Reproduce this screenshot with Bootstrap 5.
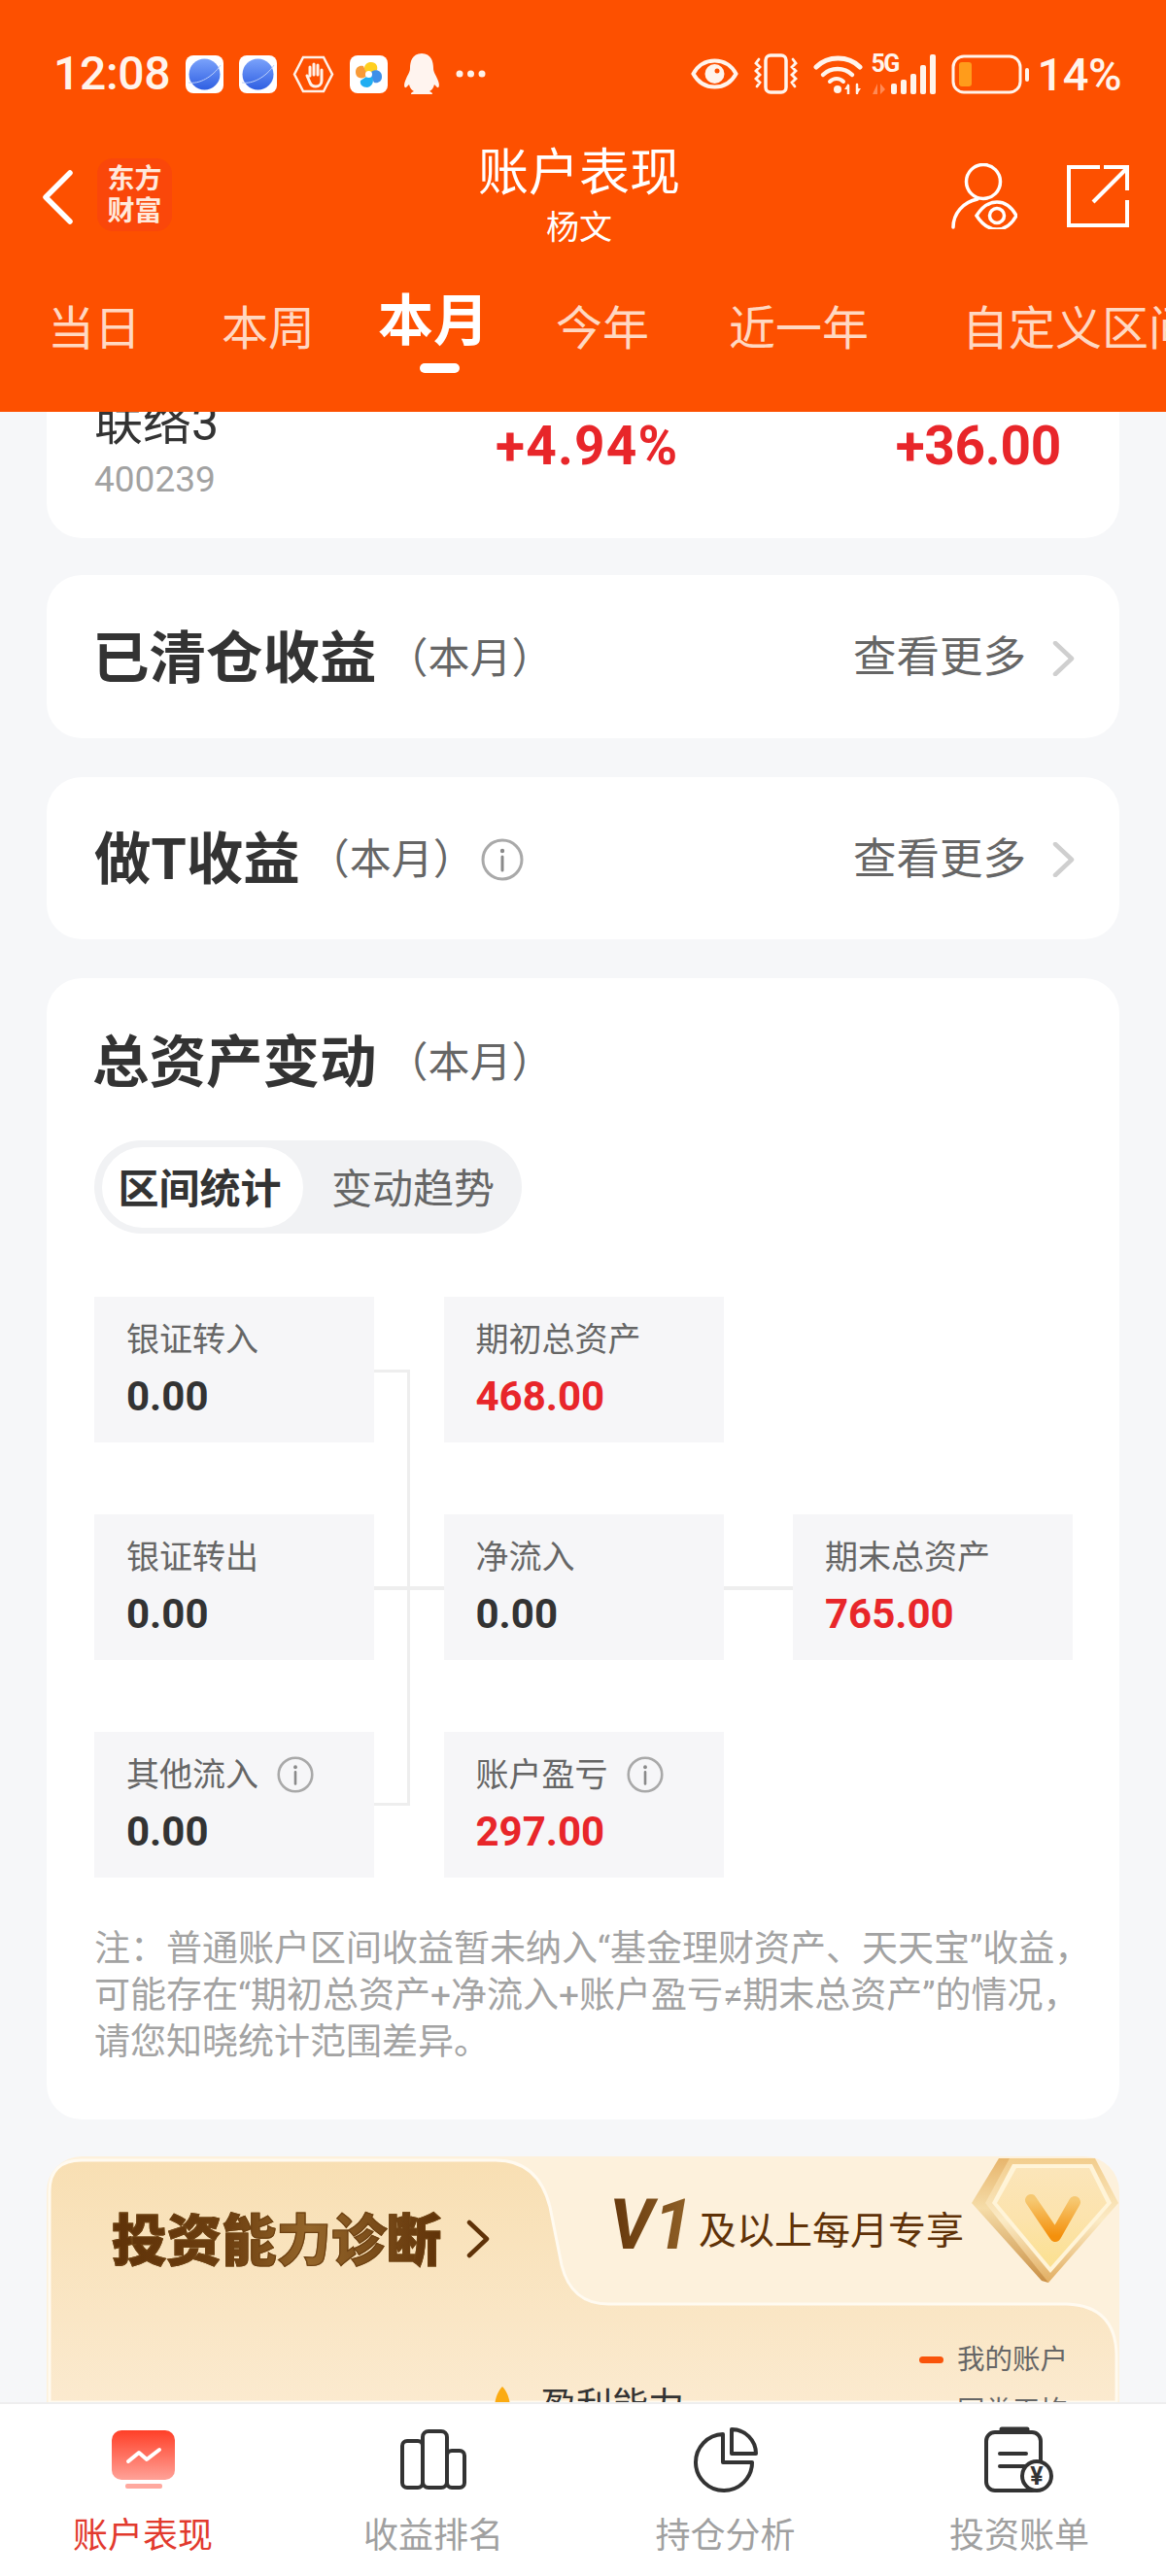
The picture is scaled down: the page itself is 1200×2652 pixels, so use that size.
<!DOCTYPE html>
<html lang="zh-CN">
<head>
<meta charset="UTF-8">
<meta name="viewport" content="width=device-width, initial-scale=1.0">
<title>账户表现</title>
<link href="https://cdn.jsdelivr.net/npm/bootstrap@5.3.0/dist/css/bootstrap.min.css" rel="stylesheet">
<style>
  html, body { height: 2652px; }
  body { font-family: Roboto, "Noto Sans CJK SC", sans-serif; background: #f6f7f9; color: #333; overflow: hidden; }
  svg { display: block; flex-shrink: 0; }

  /* 顶部 */
  .top-head { height: 424px; background: #fd5000; color: #fff; flex-shrink: 0; }
  .status-row { height: 152px; padding: 0 46px 0 55px; color: #fff4ec; }
  .status-time { font-size: 48px; font-weight: 500; line-height: 1; width: 120px; letter-spacing: -.3px; }
  .status-pct { font-size: 47px; font-weight: 500; line-height: 1; letter-spacing: -.5px; }
  .title-row { height: 149px; }
  .title-left { width: 240px; padding-left: 43px; }
  .title-right { width: 248px; padding-left: 27px; }
  .logo-tile { width: 77px; height: 75px; margin-left: 25px; margin-top: 11px; background: #fa470a; border-radius: 16px; font-size: 28px; line-height: 33px; font-weight: 700; color: #ffe9dc; text-align: center; padding-top: 5px; }
  .back-arrow { margin-top: 23px; }
  .page-title { font-size: 52px; line-height: 58px; margin-top: -2px; }
  .page-sub { font-size: 34px; line-height: 42px; margin-top: 5px; }
  .person-icon { margin-top: 16px; }
  .share-icon { margin: 18px 0 0 51px; }
  .tab-row { padding-left: 49px; height: 123px; overflow: hidden; font-size: 48px; line-height: 60px; color: #ffd8c2; white-space: nowrap; }
  .tab-item { flex-shrink: 0; position: relative; margin-top: 8px; }
  .tab-item:nth-child(2) { margin-left: 83px; }
  .tab-item:nth-child(3) { margin-left: 65px; margin-top: 0; font-size: 57px; font-weight: 700; color: #fff; }
  .tab-item:nth-child(4) { margin-left: 69px; }
  .tab-item:nth-child(5) { margin-left: 82px; }
  .tab-item:nth-child(6) { margin-left: 96px; }
  .tab-item:nth-child(3)::after { content: ""; position: absolute; left: 43px; top: 73px; width: 41px; height: 10px; border-radius: 5px; background: #fff; }

  /* 内容 */
  .scroll-area { flex: 1 1 auto; min-height: 0; overflow: hidden; padding: 0 48px; }
  .acct-card { border: 0; border-radius: 36px; background: #fff; margin-bottom: 40px; }
  .hold-card { height: 230px; margin-top: -100px; margin-bottom: 38px; padding: 82px 60px 0 49px; }
  .hold-name { width: 413px; }
  .hold-title { font-size: 50px; line-height: 60px; color: #333; }
  .hold-code { font-size: 37px; line-height: 44px; color: #a2a2a2; margin-top: 6px; }
  .hold-pct { width: 300px; font-size: 55px; line-height: 60px; margin-top: 23px; font-weight: 700; color: #e8262a; letter-spacing: 1.200px; }
  .hold-amt { font-size: 55px; line-height: 60px; margin-top: 23px; font-weight: 700; color: #e8262a; letter-spacing: -.3px; }
  .link-card { height: 168px; padding: 3px 46px 0 47px; }
  .link-card.short-card { height: 167px; padding-left: 49px; }
  .sec-title { font-size: 58.500px; line-height: 70px; font-weight: 700; color: #333; }
  .sec-range { font-size: 43px; line-height: 70px; color: #666; margin-left: 10px; }
  .short-card .sec-range { margin-left: 8px; }
  .more-text { font-size: 44.500px; color: #666; margin-right: 27px; }
  .info-gap { margin-left: 6px; }

  .asset-card { padding: 52px 48px 55px 49px; margin-bottom: 38px; }
  .asset-card .sec-title { margin-left: -2px; }
  .seg-pills { width: 440px; height: 96px; margin-top: 45px; padding: 7px 8px; background: #f1f2f4; border-radius: 48px; flex-wrap: nowrap; }
  .seg-pills .nav-link { padding: 0; height: 83px; line-height: 87px; font-size: 42px; text-align: center; color: #666; white-space: nowrap; }
  .seg-pills .nav-link.active { width: 207px; padding-right: 6px; background: #fff; color: #333; font-weight: 700; border-radius: 42px; }
  .seg-pills .nav-item:last-child { margin-left: 29px; }
  .flow-chart { position: relative; margin-top: 65px; display: grid; grid-template-columns: repeat(3, 288px); grid-auto-rows: 150px; column-gap: 71.500px; row-gap: 74px; }
  .flow-box { background: #f6f6f8; padding: 22px 0 0 33px; position: relative; z-index: 1; }
  .flow-label { font-size: 34px; line-height: 44px; color: #666; }
  .flow-value { font-size: 42px; line-height: 50px; margin-top: 12px; font-weight: 700; color: #333; }
  .flow-value.up { color: #e8262a; }
  .flow-line { position: absolute; background: #eeeeee; }
  .label-info { margin-left: 19px; }
  .note-text { margin-top: 50px; font-size: 37px; line-height: 48px; color: #a3a3a3; white-space: nowrap; }

  .diag-banner { height: 253px; position: relative; background: #fdf1dc; border-radius: 36px 36px 0 0; overflow: hidden; margin-bottom: 0; }
  .diag-shape { position: absolute; left: 0; top: 0; }
  .diag-top { position: relative; height: 152px; flex-shrink: 0; }
  .diag-title { font-size: 56.500px; line-height: 64px; font-weight: 900; margin: 56px 0 0 67px; width: 340px; white-space: nowrap; background: linear-gradient(90deg, #5f3208 0%, #6d3f10 35%, #95662a 60%, #5f3208 100%); -webkit-background-clip: text; background-clip: text; color: transparent; -webkit-text-stroke: 1.200px #6e4213; }
  .diag-arrow { margin: 65px 0 0 25px; }
  .diag-v { font-size: 72px; line-height: 72px; font-weight: 700; font-style: italic; margin: 35px 0 0 123px; width: 92px; white-space: nowrap; background: linear-gradient(90deg, #64360b, #95662a); -webkit-background-clip: text; background-clip: text; color: transparent; }
  .diag-once { font-size: 39px; line-height: 50px; color: #5f3208; margin: 52px 0 0 0; white-space: nowrap; }
  .diag-badge { position: absolute; right: 0; top: 1px; }
  .diag-low { position: relative; padding: 0 53px 0 461px; flex-shrink: 0; }
  .diag-skill { margin-top: 81px; font-size: 37px; line-height: 50px; color: #333; white-space: nowrap; }
  .thumb-tip { margin: 4px 31px 0 0; }
  .legend-col { padding-top: 31px; font-size: 28.500px; line-height: 53px; color: #666; }
  .legend-dash { width: 25px; height: 7px; border-radius: 4px; background: #f9540b; margin-right: 14px; }
  .legend-dash.other { background: #d9c8a8; }

  /* 底部 */
  .foot-nav { height: 179px; background: #fff; border-top: 2px solid #eeeeee; padding: 22px 0 0 0; flex-shrink: 0; position: relative; }
  .foot-nav > div:nth-child(1) { padding-right: 6px; }
  .foot-nav > div:nth-child(2) { padding-right: 8px; }
  .foot-nav > div:nth-child(3) { padding-right: 7px; }
  .foot-nav > div:nth-child(4) { padding-right: 2px; }
  .foot-icon { height: 70px; }
  .foot-label { font-size: 36px; line-height: 44px; margin-top: 22px; color: #a0a0a0; }
  .foot-label.active { color: #e23a2e; }
</style>
</head>
<body class="d-flex flex-column">

<svg width="0" height="0" class="position-absolute">
  <defs>
    <linearGradient id="planetFill" x1="0" y1="0" x2="0" y2="1"><stop offset="0" stop-color="#7aa2fb"/><stop offset="1" stop-color="#2f5fe2"/></linearGradient>
    <linearGradient id="tabIconFill" x1="0" y1="0" x2="0" y2="1"><stop offset="0" stop-color="#ff3f27"/><stop offset="1" stop-color="#ffa298"/></linearGradient>
    <linearGradient id="panelFill" x1="0" y1="0" x2="0" y2="1"><stop offset="0" stop-color="#f8dfb3"/><stop offset="1" stop-color="#fbeacf"/></linearGradient>
    <linearGradient id="gemSide" x1="0" y1="0" x2="0" y2="1"><stop offset="0" stop-color="#e7b56c"/><stop offset=".4" stop-color="#f5dca8"/><stop offset="1" stop-color="#c98f45"/></linearGradient>
    <linearGradient id="gemRim" x1="0" y1="0" x2="0" y2="1"><stop offset="0" stop-color="#f2cd8d"/><stop offset=".5" stop-color="#fbeac4"/><stop offset="1" stop-color="#e2ae62"/></linearGradient>
    <linearGradient id="gemFace" x1="0" y1="0" x2="0" y2="1"><stop offset="0" stop-color="#fbe5b9"/><stop offset=".5" stop-color="#fce3ad"/><stop offset="1" stop-color="#fbe08f"/></linearGradient>
    <linearGradient id="gemV" x1="0" y1="0" x2="0" y2="1"><stop offset="0" stop-color="#f6c871"/><stop offset="1" stop-color="#f4900c"/></linearGradient>
    <symbol id="infoIcon" viewBox="0 0 44 44">
      <circle cx="22" cy="22" r="20" fill="none" stroke="#a9a9a9" stroke-width="3"/>
      <circle cx="22" cy="13" r="2.200" fill="#8a8a8a"/>
      <path d="M22 19v14" stroke="#8a8a8a" stroke-width="3" stroke-linecap="round"/>
    </symbol>
    <symbol id="planetTile" viewBox="0 0 39 39">
      <rect width="39" height="39" rx="8" fill="#fff"/>
      <circle cx="19.500" cy="19.500" r="16" fill="url(#planetFill)"/>
      <path d="M3 28C14 30 28 22 36 10" fill="none" stroke="#bcd0fb" stroke-width="1"/>
    </symbol>
    <symbol id="chevGrey" viewBox="0 0 23 36">
      <path d="M3 2l17 16L3 34" fill="none" stroke="#cfcfcf" stroke-width="4.500" stroke-linecap="round" stroke-linejoin="round"/>
    </symbol>
  </defs>
</svg>

<header class="top-head">
  <div class="status-row d-flex align-items-center">
    <span class="status-time">12:08</span>
    <svg class="ms-3" width="39" height="39"><use href="#planetTile"/></svg>
    <svg class="ms-3" width="39" height="39"><use href="#planetTile"/></svg>
    <svg class="ms-3" width="43" height="39" viewBox="0 0 43 39" fill="none" stroke="#fff1e8">
      <path d="M11 2h21l9 17.500L32 37H11L2 19.500z" stroke-width="2.500"/>
      <path d="M15 21l3 7c1 3 3 4 6 4s6-2 6-6v-9M18 21v-9M22 20V9M26 20V10M30 20v-5" stroke-width="3" stroke-linecap="round"/>
    </svg>
    <svg class="ms-3" width="39" height="39" viewBox="0 0 39 39">
      <rect width="39" height="39" rx="8" fill="#fff"/>
      <path d="M19 19C12 15 15 7 22 7c5 0 7 4 6 8z" fill="#ffcf1f"/>
      <path d="M20 19c4-6 13-5 13 3 0 5-4 7-8 6z" fill="#3f8fe8"/>
      <path d="M20 20c6 2 5 12-2 13-5 0-8-3-7-7z" fill="#20aef2"/>
      <path d="M18 20c-3 5-12 5-12-3 0-5 4-7 8-6z" fill="#f89a38"/>
      <circle cx="19.500" cy="19.500" r="3.500" fill="#fff"/>
    </svg>
    <svg class="ms-3" width="38" height="42" viewBox="0 0 38 42">
      <path d="M19 0C9 0 7 9 7 15c0 4-2 6-4 11-3 6-2 10 0 9l3-3c1 4 3 6 5 7-3 1-4 3-2 3h20c2 0 1-2-2-3 2-1 4-3 5-7l3 3c2 1 3-3 0-9-2-5-4-7-4-11 0-6-2-15-12-15z" fill="#fff4ef"/>
    </svg>
    <svg class="ms-3" width="31" height="8" viewBox="0 0 31 8" fill="#fff1e8"><circle cx="4" cy="4" r="3.500"/><circle cx="15.500" cy="4" r="3.500"/><circle cx="27" cy="4" r="3.500"/></svg>

    <svg class="ms-auto" width="49" height="32" viewBox="0 0 49 32">
      <path d="M2.500 16C8 6 16 2.500 24.500 2.500S41 6 46.500 16C41 26 33 29.500 24.500 29.500S8 26 2.500 16z" fill="none" stroke="#fff4ec" stroke-width="4"/>
      <circle cx="24.500" cy="16" r="10" fill="#fff4ec"/><circle cx="27" cy="13" r="2.500" fill="#fd5000"/>
    </svg>
    <svg class="ms-3" width="45" height="42" viewBox="0 0 45 42" fill="none" stroke="#fff4ec" stroke-linecap="round">
      <rect x="12" y="2" width="21" height="38" rx="5" stroke-width="3.500"/>
      <path d="M5 6L2 10l4 4-4 4 4 4-4 4 4 4-3 4M40 6l3 4-4 4 4 4-4 4 4 4-4 4 3 4" stroke-width="2.800"/>
    </svg>
    <svg class="ms-3" width="51" height="41" viewBox="0 0 51 41" fill="none" stroke="#fff4ec" stroke-linecap="round">
      <path d="M3 13C15 1 36 1 48 13" stroke-width="5"/>
      <path d="M10 21c8-8 22-8 30 0" stroke-width="4.500"/>
      <path d="M17 28c4-4 10-4 14 0" stroke-width="4"/>
      <circle cx="25" cy="36" r="4" fill="#fff4ec" stroke="none"/>
      <path d="M36 32v9M45 31v9" stroke-width="2.500"/><path d="M36 30l-4 6h4zM45 41l4-6h-4z" fill="#fff4ec" stroke="none"/>
    </svg>
    <div class="position-relative ms-2" style="width:67px;height:42px">
      <span class="position-absolute top-0 start-0" style="font-size:25px;line-height:22px;font-weight:700;letter-spacing:-1.500px;color:#fff4ec">5G</span>
      <svg width="67" height="42" viewBox="0 0 67 42">
        <path d="M2 42l5-11v11zM10 31l5 6-5 5z" fill="#ff8a55"/>
        <g fill="#fff4ec"><rect x="21" y="31" width="6" height="11" rx="2"/><rect x="31" y="27" width="6" height="15" rx="2"/><rect x="41" y="21" width="6" height="21" rx="2"/><rect x="51" y="12" width="6" height="30" rx="2"/><rect x="61" y="1" width="6" height="41" rx="2"/></g>
      </svg>
    </div>
    <svg class="ms-3" width="80" height="41" viewBox="0 0 80 41">
      <rect x="2" y="2" width="69" height="37" rx="11" fill="none" stroke="#fff4ec" stroke-width="3"/>
      <rect x="8" y="8" width="13" height="25" rx="3" fill="#ff9c1b"/>
      <rect x="76" y="14" width="4" height="14" rx="2" fill="#fff4ec"/>
    </svg>
    <span class="status-pct ms-2">14%</span>
  </div>

  <div class="title-row d-flex align-items-start">
    <div class="title-left d-flex align-items-start">
      <svg class="back-arrow" width="32" height="56" viewBox="0 0 32 56"><path d="M29 3L4 28l25 25" fill="none" stroke="#fff" stroke-width="5.500" stroke-linecap="round" stroke-linejoin="round"/></svg>
      <div class="logo-tile">东方<br>财富</div>
    </div>
    <div class="flex-grow-1 text-center">
      <div class="page-title">账户表现</div>
      <div class="page-sub">杨文</div>
    </div>
    <div class="title-right d-flex align-items-start">
      <svg class="person-icon" width="68" height="68" viewBox="0 0 68 68" fill="none" stroke="#fff" stroke-width="3.500" stroke-linecap="round">
        <circle cx="33" cy="19" r="17.500"/>
        <path d="M27 37C12 40 2 52 2 66"/>
        <path d="M26 54C33 43 40 40 47 40s14 3 20 14C61 65 54 68 47 68s-14-3-21-14z" fill="#fd5000"/>
        <circle cx="47" cy="54" r="7.500"/>
      </svg>
      <svg class="share-icon" width="64" height="64" viewBox="0 0 64 64" fill="none" stroke="#fff" stroke-width="4">
        <path d="M34 2H2v60h60V36"/>
        <path d="M27 38L61 4"/>
        <path d="M38 2h24v24"/>
      </svg>
    </div>
  </div>

  <div class="tab-row d-flex align-items-start">
    <span class="tab-item">当日</span>
    <span class="tab-item">本周</span>
    <span class="tab-item">本月</span>
    <span class="tab-item">今年</span>
    <span class="tab-item">近一年</span>
    <span class="tab-item">自定义区间</span>
  </div>
</header>

<main class="scroll-area">
  <div class="card acct-card hold-card">
    <div class="d-flex">
      <div class="hold-name">
        <div class="hold-title">联络3</div>
        <div class="hold-code">400239</div>
      </div>
      <div class="hold-pct">+4.94%</div>
      <div class="hold-amt flex-grow-1 text-end">+36.00</div>
    </div>
  </div>

  <div class="card acct-card link-card flex-row align-items-center">
    <span class="sec-title">已清仓收益</span>
    <span class="sec-range">（本月）</span>
    <span class="more-text ms-auto">查看更多</span>
    <svg width="23" height="36"><use href="#chevGrey"/></svg>
  </div>

  <div class="card acct-card link-card short-card flex-row align-items-center">
    <span class="sec-title">做T收益</span>
    <span class="sec-range">（本月）</span>
    <svg class="info-gap" width="44" height="44"><use href="#infoIcon"/></svg>
    <span class="more-text ms-auto">查看更多</span>
    <svg width="23" height="36"><use href="#chevGrey"/></svg>
  </div>

  <div class="card acct-card asset-card">
    <div class="d-flex align-items-center">
      <span class="sec-title">总资产变动</span>
      <span class="sec-range">（本月）</span>
    </div>
    <ul class="nav seg-pills">
      <li class="nav-item"><a class="nav-link active" href="#">区间统计</a></li>
      <li class="nav-item"><a class="nav-link" href="#">变动趋势</a></li>
    </ul>

    <div class="flow-chart">
      <span class="flow-line" style="left:288px;top:75px;width:37px;height:3px"></span>
      <span class="flow-line" style="left:322px;top:75px;width:3px;height:449px"></span>
      <span class="flow-line" style="left:288px;top:298px;width:72px;height:4px"></span>
      <span class="flow-line" style="left:648px;top:298px;width:72px;height:4px"></span>
      <span class="flow-line" style="left:288px;top:521px;width:37px;height:3px"></span>

      <div class="flow-box"><div class="flow-label">银证转入</div><div class="flow-value">0.00</div></div>
      <div class="flow-box"><div class="flow-label">期初总资产</div><div class="flow-value up">468.00</div></div>
      <div></div>
      <div class="flow-box"><div class="flow-label">银证转出</div><div class="flow-value">0.00</div></div>
      <div class="flow-box"><div class="flow-label">净流入</div><div class="flow-value">0.00</div></div>
      <div class="flow-box"><div class="flow-label">期末总资产</div><div class="flow-value up">765.00</div></div>
      <div class="flow-box"><div class="flow-label d-flex align-items-center">其他流入<svg class="label-info" width="38" height="38"><use href="#infoIcon"/></svg></div><div class="flow-value">0.00</div></div>
      <div class="flow-box"><div class="flow-label d-flex align-items-center">账户盈亏<svg class="label-info" width="38" height="38"><use href="#infoIcon"/></svg></div><div class="flow-value up">297.00</div></div>
    </div>

    <div class="note-text">注：普通账户区间收益暂未纳入“基金理财资产、天天宝”收益，<br>可能存在“期初总资产+净流入+账户盈亏≠期末总资产”的情况，<br>请您知晓统计范围差异。</div>
  </div>

  <div class="card acct-card diag-banner">
    <svg class="diag-shape" width="1104" height="253" viewBox="0 0 1104 253">
      <path d="M3 253V36Q3 4 36 4H462Q506 4 518 52L530 112Q540 152 578 152H1050Q1100 154 1101 204V253Z" fill="url(#panelFill)" stroke="#fffaf0" stroke-width="3"/>
    </svg>
    <div class="diag-top d-flex align-items-start">
      <div class="diag-title">投资能力诊断</div>
      <svg class="diag-arrow" width="24" height="40" viewBox="0 0 24 40"><path d="M3 3l18 17L3 37" fill="none" stroke="#5f3208" stroke-width="4.500" stroke-linecap="round" stroke-linejoin="round"/></svg>
      <div class="diag-v">V1</div>
      <div class="diag-once">及以上每月专享</div>
      <svg class="diag-badge" width="152" height="130" viewBox="0 0 152 130">
        <path d="M28 1H42L79 129 72 127 0 47z" fill="url(#gemSide)"/>
        <path d="M39 1H127L151 47 79 129 14 47z" fill="url(#gemRim)"/>
        <path d="M42 7H124L144 47 81 119 21 47z" fill="#fff4d8"/>
        <path d="M46 11H121L139 47 81 113 26 47z" fill="url(#gemFace)"/>
        <path d="M61 44L86 81 106 46" fill="none" stroke="url(#gemV)" stroke-width="12" stroke-linecap="round" stroke-linejoin="round"/>
      </svg>
    </div>
    <div class="diag-low d-flex justify-content-between">
      <div class="diag-skill d-flex">
        <svg class="thumb-tip" width="16" height="40" viewBox="0 0 16 40"><path d="M8 0C12 4 16 12 16 22H0C0 12 4 4 8 0z" fill="#fbab12"/></svg>
        <span>盈利能力</span>
      </div>
      <div class="legend-col">
        <div class="d-flex align-items-center"><span class="legend-dash"></span>我的账户</div>
        <div class="d-flex align-items-center"><span class="legend-dash other"></span>同类平均</div>
      </div>
    </div>
  </div>
</main>

<nav class="foot-nav row g-0 m-0">
  <div class="col-3 text-center">
    <div class="foot-icon d-flex justify-content-center align-items-center">
      <svg width="65" height="60" viewBox="0 0 65 60">
        <rect width="65" height="51" rx="10" fill="url(#tabIconFill)"/>
        <rect x="14" y="55" width="38" height="5" rx="2" fill="#ffa99f"/>
        <path d="M17 32L28 23 36 30 49 20" fill="none" stroke="#fff" stroke-width="4" stroke-linecap="round" stroke-linejoin="round"/>
      </svg>
    </div>
    <div class="foot-label active">账户表现</div>
  </div>
  <div class="col-3 text-center">
    <div class="foot-icon d-flex justify-content-center align-items-center">
      <svg width="68" height="62" viewBox="0 0 68 62" fill="none" stroke="#333" stroke-width="4" stroke-linejoin="round">
        <rect x="2" y="12" width="21" height="48" rx="5"/>
        <rect x="23" y="2" width="25" height="58" rx="6"/>
        <rect x="48" y="22" width="18" height="38" rx="5"/>
      </svg>
    </div>
    <div class="foot-label">收益排名</div>
  </div>
  <div class="col-3 text-center">
    <div class="foot-icon d-flex justify-content-center align-items-center">
      <svg width="67" height="67" viewBox="-1 -1 67 67" fill="none" stroke="#333" stroke-width="4" stroke-linejoin="round">
        <path d="M30 6A29 29 0 1 0 60 35H30z"/>
        <path d="M39 1A25 25 0 0 1 64 26H39z"/>
      </svg>
    </div>
    <div class="foot-label">持仓分析</div>
  </div>
  <div class="col-3 text-center">
    <div class="foot-icon d-flex justify-content-center align-items-center">
      <svg width="72" height="68" viewBox="0 0 72 68" fill="none" stroke="#333" stroke-width="4" stroke-linecap="round">
        <rect x="2" y="6" width="56" height="60" rx="9"/>
        <path d="M18 3h26" stroke-width="5"/>
        <path d="M16 28h27M16 41h26"/>
        <circle cx="54" cy="51" r="15" fill="#fff"/>
        <text x="54" y="60" font-size="25" font-weight="700" text-anchor="middle" fill="#333" stroke="none" font-family="Roboto, sans-serif">¥</text>
      </svg>
    </div>
    <div class="foot-label">投资账单</div>
  </div>
</nav>

<script src="https://cdn.jsdelivr.net/npm/bootstrap@5.3.0/dist/js/bootstrap.bundle.min.js"></script>
</body>
</html>
